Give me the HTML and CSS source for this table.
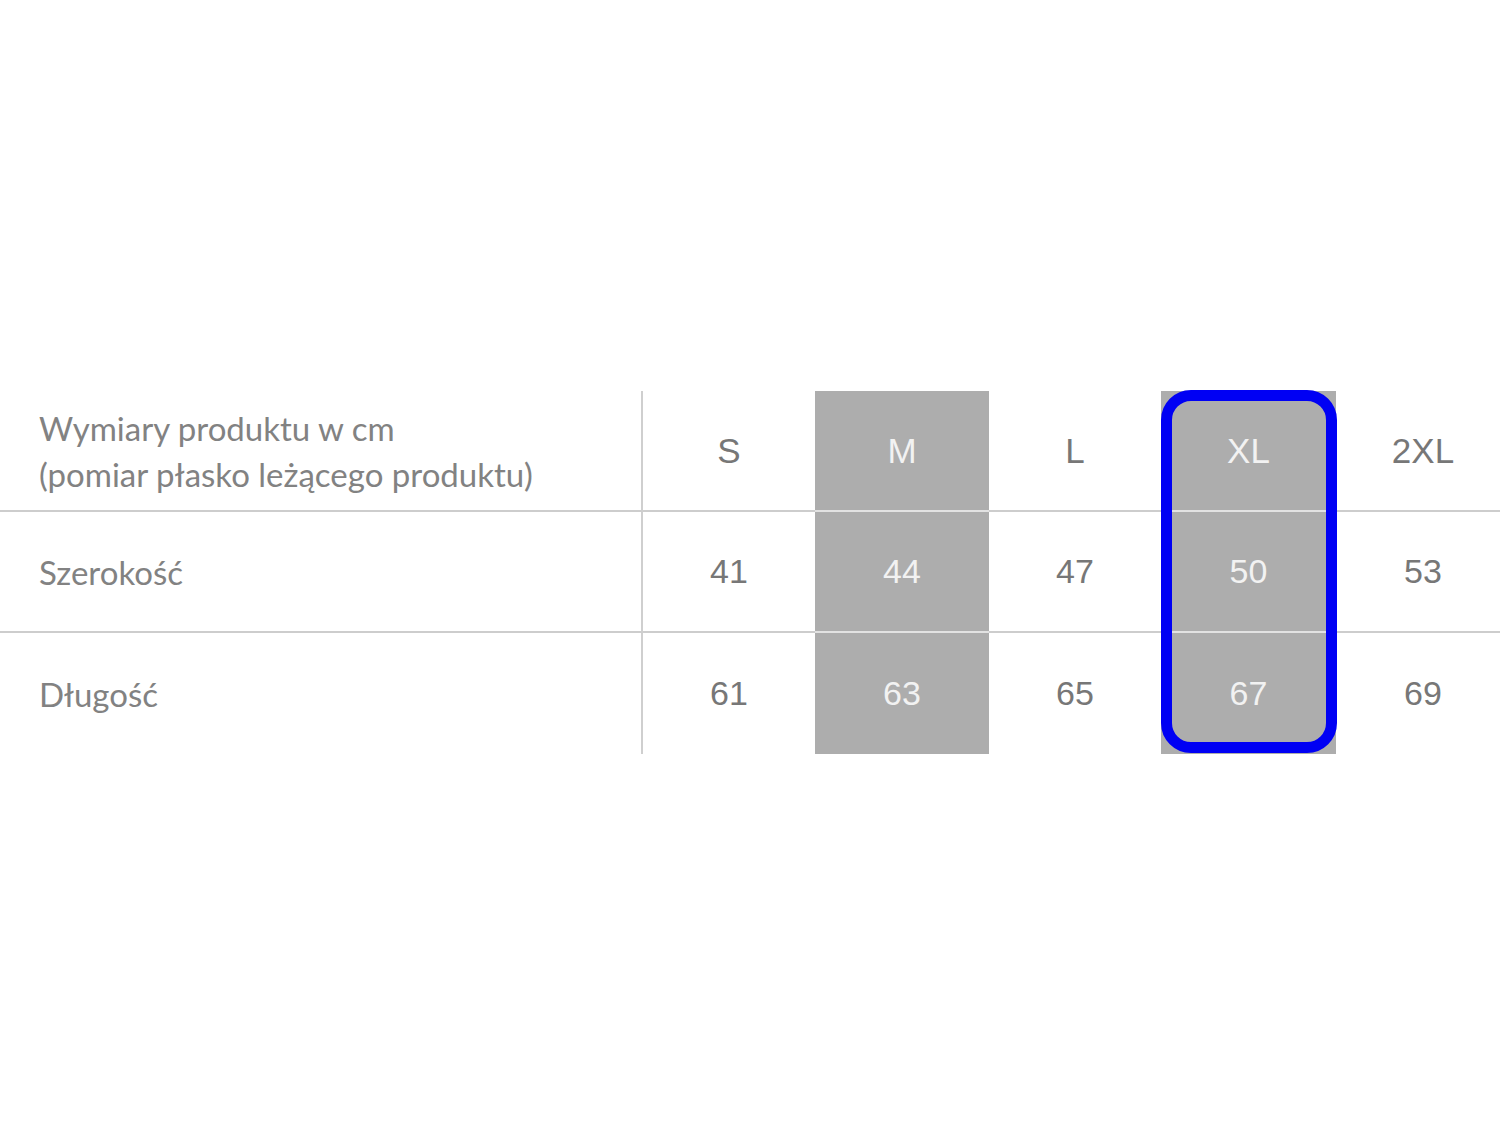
FILE: index.html
```html
<!DOCTYPE html>
<html lang="pl">
<head>
<meta charset="utf-8">
<title>Tabela rozmiarów</title>
<link rel="stylesheet" href="styles.css">
</head>
<body>
<div class="page">
  <div class="table">
    <div class="cell label head first">
      <span>Wymiary produktu w cm</span>
      <span>(pomiar płasko leżącego produktu)</span>
    </div>
    <div class="cell size first">S</div>
    <div class="cell size first hl">M</div>
    <div class="cell size first">L</div>
    <div class="cell size first hl">XL</div>
    <div class="cell size first">2XL</div>

    <div class="cell label first">Szerokość</div>
    <div class="cell num first">41</div>
    <div class="cell num first hl">44</div>
    <div class="cell num first">47</div>
    <div class="cell num first hl">50</div>
    <div class="cell num first">53</div>

    <div class="cell label">Długość</div>
    <div class="cell num">61</div>
    <div class="cell num hl">63</div>
    <div class="cell num">65</div>
    <div class="cell num hl">67</div>
    <div class="cell num">69</div>

    <div class="marker"></div>
  </div>
</div>
</body>
</html>
```

FILE: styles.css
```css
html, body {
  margin: 0;
  padding: 0;
  background: #ffffff;
  overflow: hidden;
}

.page {
  width: 1500px;
  height: 1124px;
  padding-top: 391px;
  box-sizing: border-box;
  overflow: hidden;
}

.table {
  position: relative;
  display: grid;
  grid-template-columns: 643px 172px 174px 172px 175px 174px;
  grid-template-rows: 121px 121px 121px;
  width: 1510px;
}

.cell {
  box-sizing: border-box;
  display: flex;
  align-items: center;
  justify-content: center;
  font-family: "Liberation Sans", Arial, sans-serif;
  font-size: 34px;
  color: #777777;
}

.cell.first {
  border-bottom: 2px solid #cdcdcd;
}

.cell.label {
  justify-content: flex-start;
  padding-left: 39px;
  border-right: 2px solid #cfcfcf;
  font-family: "Lato", "Open Sans", sans-serif;
  font-size: 33px;
  color: #828282;
}

.cell.head {
  flex-direction: column;
  align-items: flex-start;
  justify-content: center;
  gap: 0;
  line-height: 46px;
}

.cell.size {
  font-size: 35px;
}

.cell.hl {
  background: #adadad;
  color: #f2f2f2;
}

.cell.hl.first {
  border-bottom-color: #e2e2e2;
}

.marker {
  position: absolute;
  left: 1161px;
  top: -1px;
  width: 176px;
  height: 363px;
  box-sizing: border-box;
  border: 11px solid #0000f4;
  border-radius: 30px;
  pointer-events: none;
}
```
